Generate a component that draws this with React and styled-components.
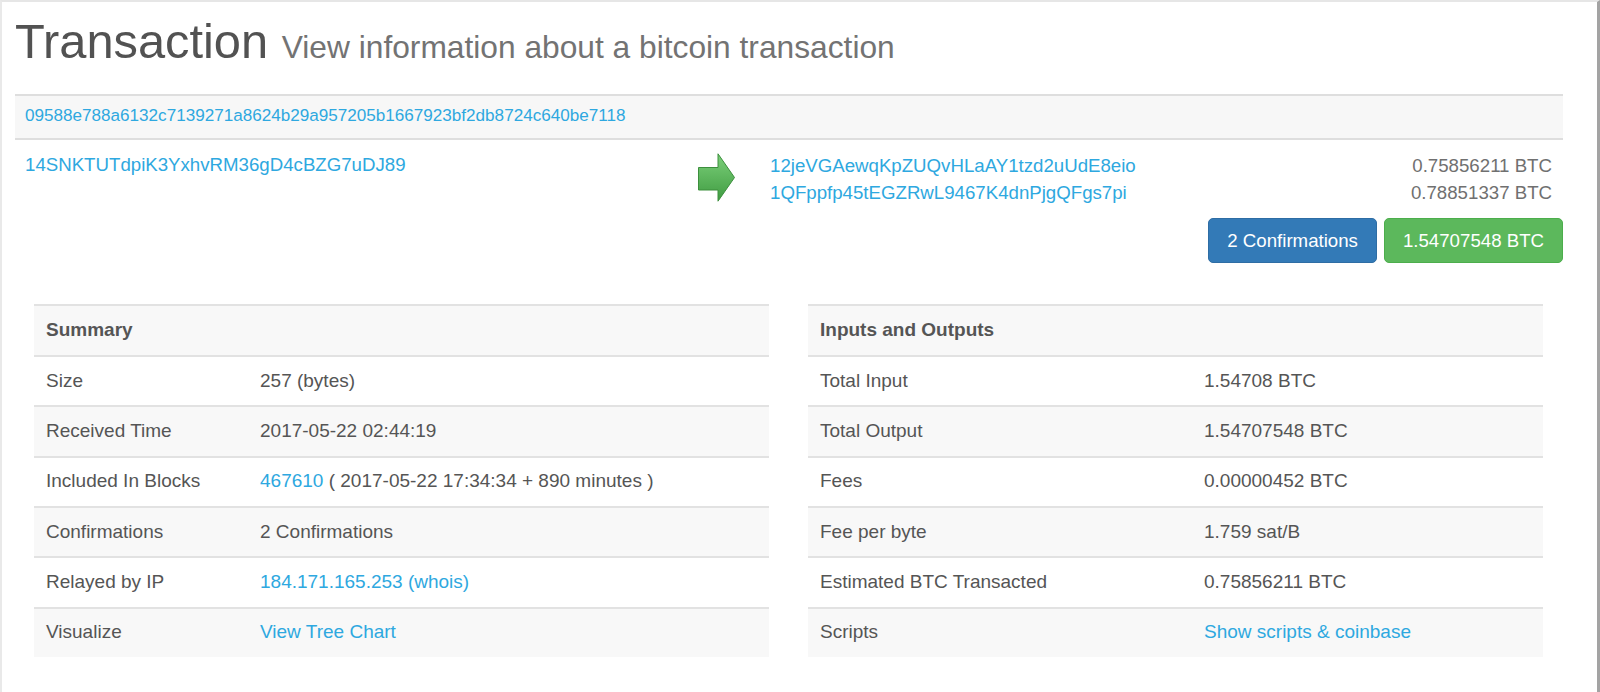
import React from 'react';
import styled, { createGlobalStyle } from 'styled-components';

const GlobalStyle = createGlobalStyle`
  html, body {
    margin: 0;
    padding: 0;
    background: #fff;
  }
  body {
    font-family: "Liberation Sans", Arial, Helvetica, sans-serif;
    font-size: 18.67px;
    line-height: 26.67px;
    color: #555;
  }
  * {
    box-sizing: border-box;
  }
`;

const Frame = styled.div`
  min-height: 692px;
  border-top: 2px solid #e6e6e6;
  border-left: 2px solid #e9e9e9;
  border-right: 3px solid #a3a3a3;
  padding: 13px 34px 0 13px;
`;

const PageTitle = styled.h1`
  margin: 0 0 20px;
  font-size: 48.8px;
  line-height: 52.8px;
  font-weight: 400;
  color: #525252;

  small {
    font-size: 65%;
    color: #737373;
  }
`;

const Link = styled.a`
  color: #2ea8e0;
  text-decoration: none;
`;

/* hash band across the full width */
const HashBar = styled.div`
  height: 46px;
  padding: 0 10px;
  display: flex;
  align-items: center;
  background: #f7f7f7;
  border-top: 2px solid #dedede;
  border-bottom: 2px solid #dedede;
  font-size: 17.1px;
`;

const TxRow = styled.div`
  display: flex;
  padding-top: 12px;
`;

const Inputs = styled.div`
  width: 683px;
  padding-left: 10px;
`;

const ArrowCell = styled.div`
  width: 72px;
  padding-top: 1px;
`;

const Outputs = styled.div`
  flex: 1;
  padding-right: 11px;
`;

const OutputLine = styled.div`
  display: flex;
  justify-content: space-between;
  line-height: 27.5px;
`;

const Amount = styled.span`
  color: #707070;
`;

const ButtonRow = styled.div`
  display: flex;
  justify-content: flex-end;
  gap: 7px;
  margin-top: 9px;
`;

const Badge = styled.span`
  height: 45px;
  padding: 0 18px;
  display: inline-flex;
  align-items: center;
  border-radius: 5px;
  color: #fff;
  background: ${(p) => (p.$variant === 'success' ? '#5cb85c' : '#337ab7')};
  border: 1px solid ${(p) => (p.$variant === 'success' ? '#4cae4c' : '#2e6da4')};
`;

const Columns = styled.div`
  display: grid;
  grid-template-columns: 1fr 1fr;
  margin-top: 41px;
`;

const Column = styled.div`
  padding: 0 20px 0 19px;
`;

const InfoTable = styled.table`
  width: 100%;
  border-collapse: collapse;
  font-size: 19px;

  tr:nth-child(odd) {
    background: #f8f8f8;
  }
  th,
  td {
    padding: 10.85px 12px 10.85px;
    border-top: 2px solid #e2e2e2;
    text-align: left;
    vertical-align: top;
    line-height: 26.67px;
  }
  th {
    font-weight: 700;
  }
  td:first-child {
    width: ${(p) => p.$labelWidth}px;
  }
`;

const GreenArrow = () => (
  <svg width="37" height="49" viewBox="0 0 37 49">
    <defs>
      <linearGradient id="arrowFill" x1="0" y1="0" x2="0" y2="1">
        <stop offset="0" stopColor="#7cd07a" />
        <stop offset="1" stopColor="#3f9b41" />
      </linearGradient>
    </defs>
    <path
      d="M0.5 14.5 H20 V0.8 L36.5 24.5 L20 48.2 V37 H0.5 Z"
      fill="url(#arrowFill)"
      stroke="#3c8f3d"
      strokeWidth="1"
      strokeLinejoin="round"
    />
  </svg>
);

const summaryRows = [
  ['Size', '257 (bytes)'],
  ['Received Time', '2017-05-22 02:44:19'],
  [
    'Included In Blocks',
    <>
      <Link href="#">467610</Link> ( 2017-05-22 17:34:34 + 890 minutes )
    </>,
  ],
  ['Confirmations', '2 Confirmations'],
  ['Relayed by IP', <Link href="#">184.171.165.253 (whois)</Link>],
  ['Visualize', <Link href="#">View Tree Chart</Link>],
];

const ioRows = [
  ['Total Input', '1.54708 BTC'],
  ['Total Output', '1.54707548 BTC'],
  ['Fees', '0.00000452 BTC'],
  ['Fee per byte', '1.759 sat/B'],
  ['Estimated BTC Transacted', '0.75856211 BTC'],
  ['Scripts', <Link href="#">Show scripts &amp; coinbase</Link>],
];

const DetailTable = ({ title, rows, labelWidth }) => (
  <InfoTable $labelWidth={labelWidth}>
    <tbody>
      <tr>
        <th colSpan={2}>{title}</th>
      </tr>
      {rows.map(([label, value]) => (
        <tr key={label}>
          <td>{label}</td>
          <td>{value}</td>
        </tr>
      ))}
    </tbody>
  </InfoTable>
);

const App = () => (
  <>
    <GlobalStyle />
    <Frame>
      <PageTitle>
        Transaction <small>View information about a bitcoin transaction</small>
      </PageTitle>

      <HashBar>
        <Link href="#">09588e788a6132c7139271a8624b29a957205b1667923bf2db8724c640be7118</Link>
      </HashBar>

      <TxRow>
        <Inputs>
          <Link href="#">14SNKTUTdpiK3YxhvRM36gD4cBZG7uDJ89</Link>
        </Inputs>
        <ArrowCell>
          <GreenArrow />
        </ArrowCell>
        <Outputs>
          <OutputLine>
            <Link href="#">12jeVGAewqKpZUQvHLaAY1tzd2uUdE8eio</Link>
            <Amount>0.75856211 BTC</Amount>
          </OutputLine>
          <OutputLine>
            <Link href="#">1QFppfp45tEGZRwL9467K4dnPjgQFgs7pi</Link>
            <Amount>0.78851337 BTC</Amount>
          </OutputLine>
        </Outputs>
      </TxRow>

      <ButtonRow>
        <Badge>2 Confirmations</Badge>
        <Badge $variant="success">1.54707548 BTC</Badge>
      </ButtonRow>

      <Columns>
        <Column>
          <DetailTable title="Summary" rows={summaryRows} labelWidth={214} />
        </Column>
        <Column>
          <DetailTable title="Inputs and Outputs" rows={ioRows} labelWidth={384} />
        </Column>
      </Columns>
    </Frame>
  </>
);

export default App;
